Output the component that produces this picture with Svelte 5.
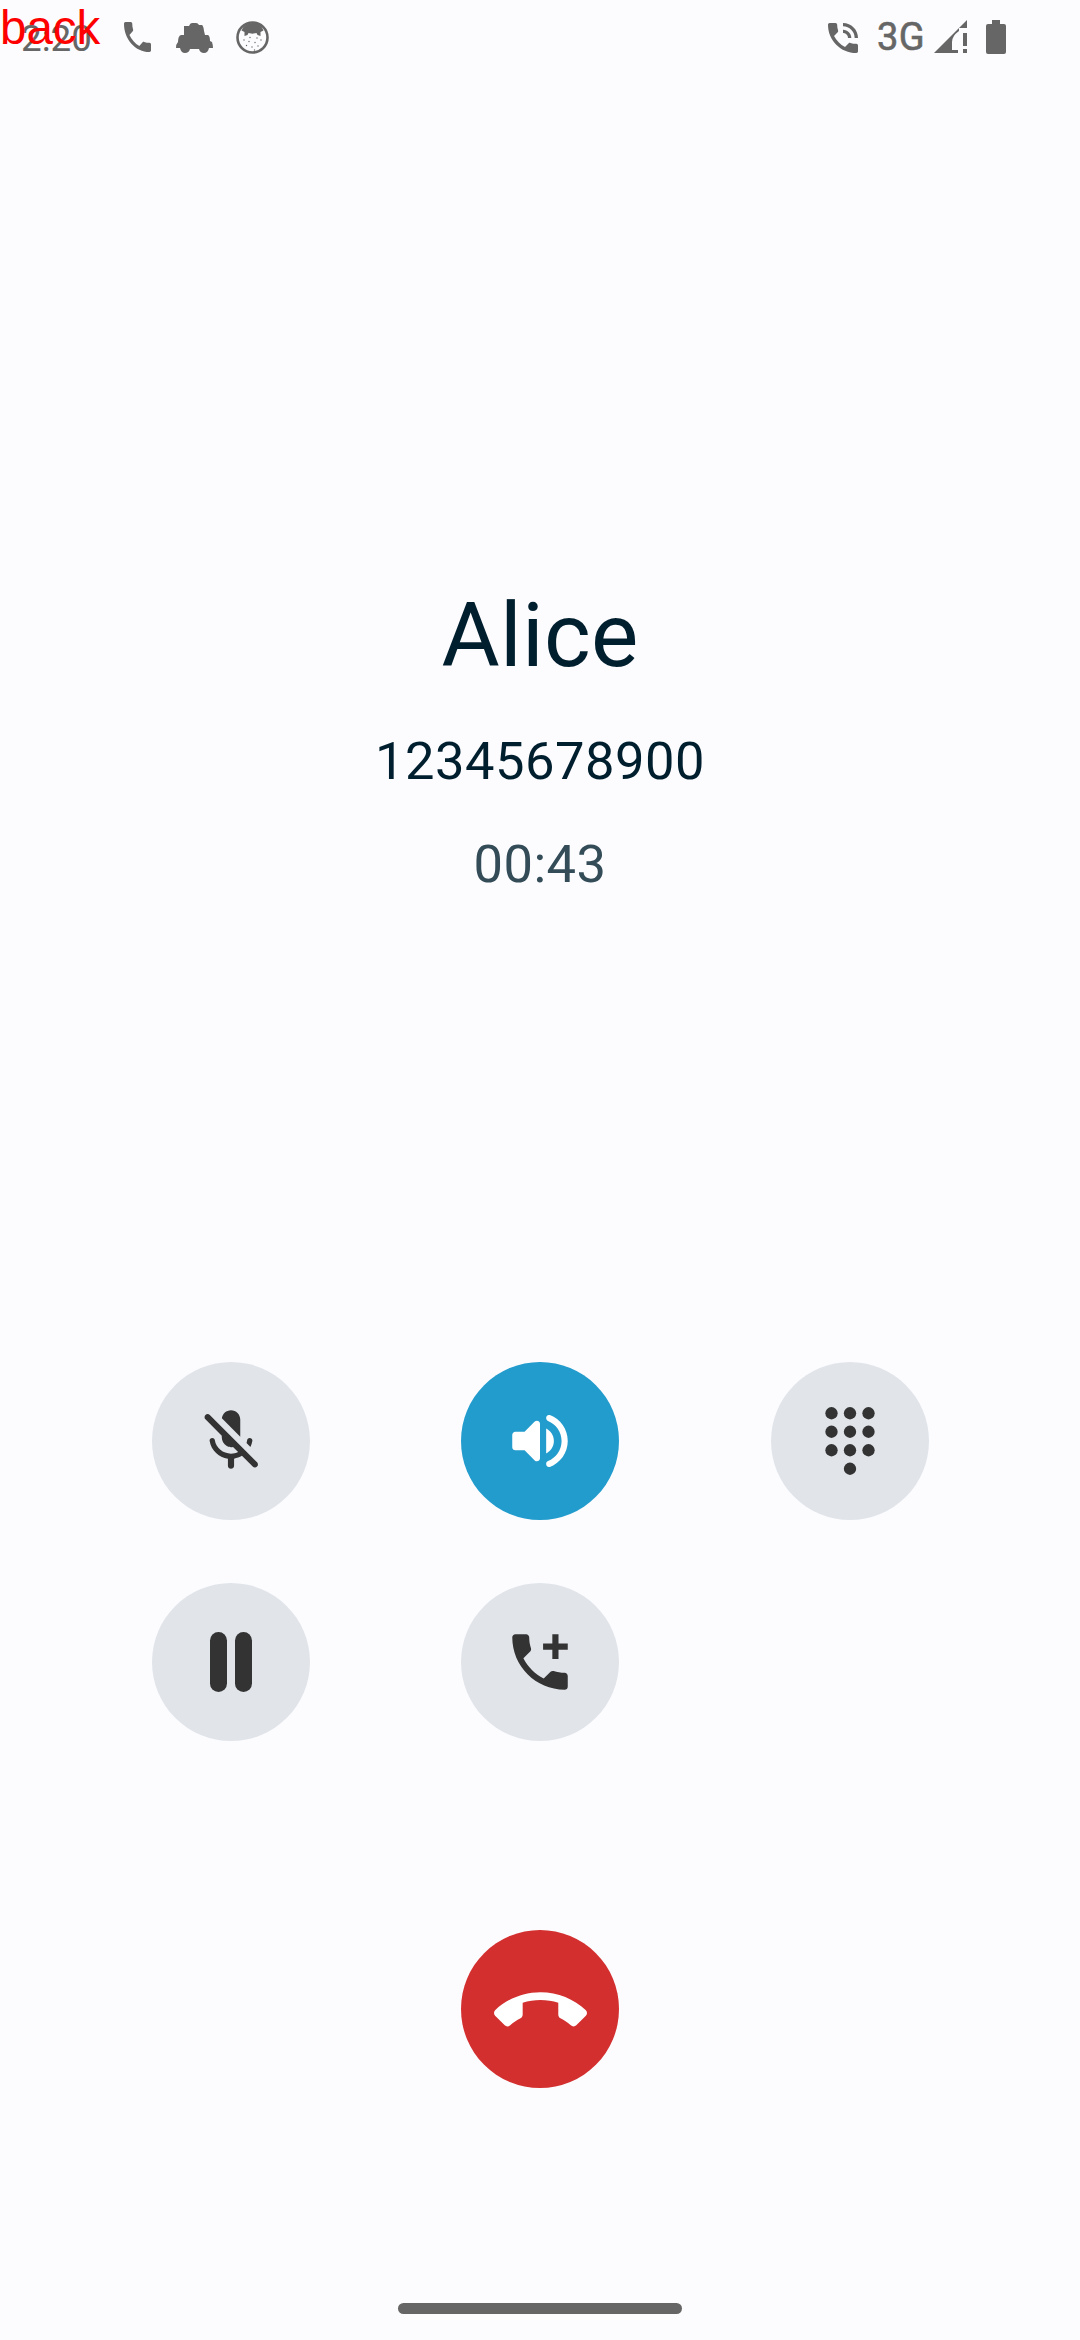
<script>
  const keys = [3, 9, 15].flatMap((y) => [6, 12, 18].map((x) => [x, y]));
  keys.push([12, 21]);
  const freckles = [[8,19],[13,20.5],[19,21.5],[25,19],[10.500,24.5],[16,26],[22,25],[18.500,29],[14,16.5],[21,17]];
  const handset =
    'M20 15.5c-1.25 0-2.45-.2-3.57-.57-.35-.11-.74-.03-1.02.24l-2.2 2.2c-2.83-1.44-5.15-3.75-6.59-6.58l2.2-2.21c.28-.27.36-.66.25-1.01C8.7 6.45 8.5 5.25 8.5 4c0-.55-.45-1-1-1H4c-.55 0-1 .45-1 1 0 9.39 7.61 17 17 17 .55 0 1-.45 1-1v-3.5c0-.55-.45-1-1-1z';
</script>

<div class="screen">
  <header>
    <div class="left">
      <span class="clock">2:20</span>
      <svg class="call" viewBox="3 3 18 18" preserveAspectRatio="none"><path d={handset} /></svg>
      <svg class="car" viewBox="0 0 37 30"><path d="M8 3h5q1-3 3-3h4q2 0 3 2h3q1.500 1 2 6l1 4h3q2 1 2 6l2 1q1 3 1 6h-4q-1 5-5 5t-5-4h-9q-1 4-5 4t-5-5H0q0-4 2-6 0-6 3-7h3z" /></svg>
      <svg class="face" viewBox="0 0 33 33">
        <circle class="ring" cx="16.500" cy="16.500" r="15" />
        <path d="M5.500 9.500Q8 2 16.500 2T27.500 9.500l-3 1.500v4l-3-1-1-2-4 .7-4-.7-1 2-3 1v-4z" />
        {#each freckles as [x, y]}<circle cx={x} cy={y} r=".7" />{/each}
      </svg>
    </div>
    <div class="right">
      <svg class="wifi-call" viewBox="3 3 18 18">
        <path d={handset} />
        <path d="M19 12h2c0-4.970-4.030-9-9-9v2c3.870 0 7 3.130 7 7zM15 12h2c0-2.760-2.240-5-5-5v2c1.660 0 3 1.340 3 3z" />
      </svg>
      <span class="network">3G</span>
      <svg class="signal" viewBox="0 0 33 33"><path d="M0 33 33 0v8h-8v3q-7 5-7 11v8h6v3zM29 13h4v13h-4zM29 29h4v4h-4z" /></svg>
      <svg class="battery" viewBox="0 0 20 34"><path d="M6 0h8v4h4q2 0 2 2v26q0 2-2 2H2q-2 0-2-2V6q0-2 2-2h4z" /></svg>
    </div>
    <div class="back">back</div>
  </header>

  <section class="caller">
    <h1>Alice</h1>
    <p>12345678900</p>
    <p class="time">00:43</p>
  </section>

  <section class="actions">
    <button aria-label="Mute">
      <svg viewBox="0 0 24 24"><path d="M15 10.600V5c0-1.660-1.340-3-3-3-1.540 0-2.790 1.160-2.960 2.650L15 10.600zm3.080.4c-.41 0-.77.3-.83.71-.05.32-.12.64-.22.93l1.270 1.270c.3-.6.52-1.250.63-1.940.07-.51-.33-.97-.85-.97zM3.710 3.560c-.39.39-.39 1.020 0 1.410L9 10.270v.43c0 1.190.6 2.320 1.630 2.910.75.43 1.410.44 2.020.31l1.660 1.660c-.71.33-1.500.52-2.310.52-2.540 0-4.880-1.770-5.250-4.390-.06-.41-.42-.71-.83-.71-.52 0-.92.46-.85.97.46 2.970 2.960 5.300 5.930 5.750V20c0 .55.45 1 1 1s1-.45 1-1v-2.280c.91-.13 1.770-.45 2.550-.9l3.490 3.490c.39.39 1.020.39 1.410 0 .39-.39.39-1.020 0-1.410L5.120 3.560c-.39-.39-1.020-.39-1.410 0z" /></svg>
    </button>
    <button class="on" aria-label="Speaker">
      <svg viewBox="0 0 24 24"><path d="M3 10v4c0 .55.45 1 1 1h3l3.290 3.290c.63.63 1.710.18 1.710-.71V6.410c0-.89-1.080-1.340-1.710-.71L7 9H4c-.55 0-1 .45-1 1zm13.500 2c0-1.770-1.020-3.290-2.500-4.030v8.050c1.480-.73 2.500-2.250 2.500-4.020zM14 4.450v.2c0 .38.25.71.6.85C17.180 6.530 19 9.060 19 12s-1.820 5.470-4.400 6.500c-.36.14-.6.47-.6.85v.2c0 .63.63 1.070 1.210.85C18.600 19.110 21 15.840 21 12s-2.400-7.110-5.790-8.400c-.58-.23-1.210.22-1.210.85z" /></svg>
    </button>
    <button aria-label="Keypad">
      <svg viewBox="0 0 24 24">{#each keys as [x, y]}<circle cx={x} cy={y} r="2" />{/each}</svg>
    </button>
    <button aria-label="Hold"><span class="bar"></span><span class="bar"></span></button>
    <button aria-label="Add call">
      <svg viewBox="0 0 24 24"><path d={handset} /><path d="M21 6h-3V3h-2v3h-3v2h3v3h2V8h3z" /></svg>
    </button>
  </section>

  <button class="end" aria-label="End call">
    <svg viewBox="0 0 24 24"><path d="M12 9c-1.600 0-3.150.25-4.600.72v3.100c0 .39-.23.74-.56.9-.98.49-1.870 1.120-2.660 1.850-.18.18-.43.28-.7.28-.28 0-.53-.11-.71-.29L.29 13.080c-.18-.17-.29-.42-.29-.7 0-.28.11-.53.29-.71C3.340 8.780 7.460 7 12 7s8.660 1.780 11.710 4.670c.18.18.29.43.29.71 0 .28-.11.53-.29.71l-2.480 2.480c-.18.18-.43.29-.71.29-.27 0-.52-.11-.7-.28-.79-.74-1.690-1.360-2.670-1.850-.33-.16-.56-.5-.56-.9v-3.100C15.150 9.250 13.600 9 12 9z" /></svg>
  </button>
  <div class="home"></div>
</div>

<style>
  :global(body) { margin: 0; background: #fcfcff; }
  * { box-sizing: border-box; }
  .screen {
    width: 1080px; height: 2340px; overflow: hidden;
    display: flex; flex-direction: column; align-items: center;
    background: #fcfcff; color: #001f2e; font-family: Roboto, sans-serif;
  }
  svg { display: block; fill: currentColor; flex: none; }
  header {
    position: relative; width: 100%; height: 76px; flex: none;
    display: flex; justify-content: space-between;
    padding: 0 74px 0 21px; color: #666; font-size: 36.75px; line-height: 78px;
  }
  .left, .right { display: flex; align-items: flex-start; }
  .clock { width: 103px; }
  .call { width: 27px; height: 30px; margin-top: 22px; }
  .car { width: 37px; height: 30px; margin: 23px 0 0 25px; }
  .face { width: 33px; height: 33px; margin: 21px 0 0 23px; }
  .ring { fill: none; stroke: currentColor; stroke-width: 2.6; }
  .wifi-call { width: 30px; height: 30px; margin-top: 22.5px; }
  .network {
    width: 57px; margin-left: 19px; font-size: 38px; line-height: 75px;
    letter-spacing: .5px; -webkit-text-stroke: .6px currentColor;
  }
  .signal { width: 33px; height: 33px; margin-top: 20px; }
  .battery { width: 20px; height: 34px; margin: 20px 0 0 19px; }
  .back {
    position: absolute; left: 0; top: 0; color: #f00;
    font: 47.5px/56px "Liberation Sans", Arial, sans-serif;
  }
  .caller { flex: none; height: 1286px; padding-top: 508px; text-align: center; }
  h1, p { margin: 0; font-weight: 400; }
  h1 { font-size: 89.25px; line-height: 104px; letter-spacing: .3px; }
  p { font-size: 52.5px; line-height: 62px; margin-top: 42px; letter-spacing: .5px; }
  .time { margin-top: 41px; color: #334c58; }
  .actions {
    width: 777px; flex: none; display: grid;
    grid-template-columns: repeat(3, 158px); justify-content: space-between; row-gap: 63px;
  }
  button {
    width: 158px; height: 158px; padding: 0; border: 0; border-radius: 50%;
    display: flex; align-items: center; justify-content: center; gap: 8px;
    background: #e1e5ea; color: #333;
  }
  button svg { width: 74px; height: 74px; }
  .on { background: #229bcd; color: #fff; }
  .bar { width: 17px; height: 60px; border-radius: 9px; background: #333; }
  .end { margin-top: 189px; flex: none; background: #d32f2f; color: #fff; }
  .end svg { width: 93px; height: 93px; margin-top: 4px; }
  .home { width: 284px; height: 11px; margin-top: 215px; flex: none; border-radius: 6px; background: #666; }
</style>
